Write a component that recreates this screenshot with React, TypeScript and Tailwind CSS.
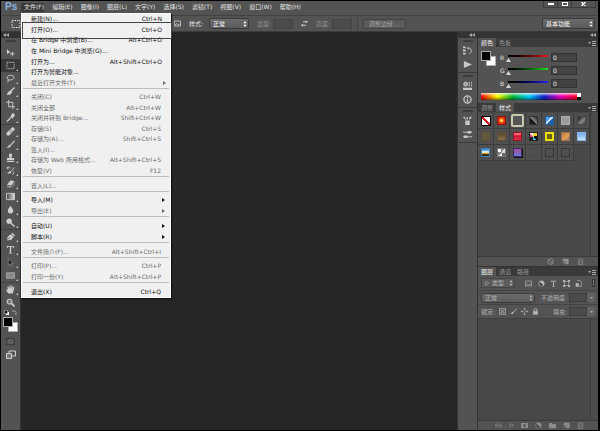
import type { ReactNode } from "react";
import clsx from "clsx";

type MenuEntry = {
  label: string;
  keys?: string;
  sub?: boolean;
  off?: boolean;
};

const fileMenu: { height: string; items: MenuEntry[] }[] = [
  {
    height: "h-[74px]",
    items: [
      { label: "新建(N)...", keys: "Ctrl+N" },
      { label: "打开(O)...", keys: "Ctrl+O" },
      { label: "在 Bridge 中浏览(B)...", keys: "Alt+Ctrl+O" },
      { label: "在 Mini Bridge 中浏览(G)..." },
      { label: "打开为...", keys: "Alt+Shift+Ctrl+O" },
      { label: "打开为智能对象..." },
      { label: "最近打开文件(T)", sub: true, off: true },
    ],
  },
  {
    height: "h-[84px]",
    items: [
      { label: "关闭(C)", keys: "Ctrl+W", off: true },
      { label: "关闭全部", keys: "Alt+Ctrl+W", off: true },
      { label: "关闭并转到 Bridge...", keys: "Shift+Ctrl+W", off: true },
      { label: "存储(S)", keys: "Ctrl+S", off: true },
      { label: "存储为(A)...", keys: "Shift+Ctrl+S", off: true },
      { label: "签入(I)...", off: true },
      { label: "存储为 Web 所用格式...", keys: "Alt+Shift+Ctrl+S", off: true },
      { label: "恢复(V)", keys: "F12", off: true },
    ],
  },
  { height: "h-[11px]", items: [{ label: "置入(L)...", off: true }] },
  {
    height: "h-[21px]",
    items: [
      { label: "导入(M)", sub: true },
      { label: "导出(E)", sub: true, off: true },
    ],
  },
  {
    height: "h-[22px]",
    items: [
      { label: "自动(U)", sub: true },
      { label: "脚本(R)", sub: true },
    ],
  },
  { height: "h-[11px]", items: [{ label: "文件简介(F)...", keys: "Alt+Shift+Ctrl+I", off: true }] },
  {
    height: "h-[21px]",
    items: [
      { label: "打印(P)...", keys: "Ctrl+P", off: true },
      { label: "打印一份(Y)", keys: "Alt+Shift+Ctrl+P", off: true },
    ],
  },
  { height: "h-[11px]", items: [{ label: "退出(X)", keys: "Ctrl+Q" }] },
];

const menus = ["编辑(E)", "图像(I)", "图层(L)", "文字(Y)", "选择(S)", "滤镜(T)", "视图(V)", "窗口(W)", "帮助(H)"];

const icons: Record<string, ReactNode> = {
  move: (
    <>
      <path d="M1 1v6l1.6-1.4L5 5.300z" fill="currentColor" />
      <path d="M7 4v5M4.500 6.500h5" stroke="currentColor" />
    </>
  ),
  marquee: <path d="M1 1.500h8v7H1z" stroke="currentColor" strokeDasharray="1.500 1" />,
  lasso: <path d="M2.500 6C0 4 2 1.500 5 1.500s5 2 3.500 3.500S4 7.500 2.500 6c-1 .5-.5 2 .7 1.500M3 7.500 1.500 9.500" stroke="currentColor" />,
  wand: (
    <>
      <path d="M9.500.5 5 5" stroke="currentColor" strokeWidth="1.500" />
      <path d="M5.500 4 7 5.500 5 8C3.500 9 2 8.500 1 9c.5-1.500.5-3 2-4z" fill="currentColor" />
    </>
  ),
  crop: <path d="M3 0v7.500h7M0 2.500h7.500V10" stroke="currentColor" />,
  dropper: (
    <>
      <path d="M1 9.500 5.500 5" stroke="currentColor" strokeWidth="1.400" />
      <path d="m4.500 3.500 3 3L8 5l1.500-1.700C10.500 1.500 8.500-.5 6.700.7L5.500 3z" fill="currentColor" />
    </>
  ),
  heal: (
    <>
      <path d="M2.500 7.500 7.500 2.500" stroke="currentColor" strokeWidth="4" strokeLinecap="round" />
      <path d="m3.500 4 3 3M5 2.500l3 3" stroke="#535353" strokeWidth=".7" />
    </>
  ),
  brush: (
    <>
      <path d="M9.500 1 5 6" stroke="currentColor" strokeWidth="1.300" />
      <path d="M5.500 6.500C5 8.500 2.500 9 .5 8.500 2.500 8 2.500 5.500 4 5.500z" fill="currentColor" />
    </>
  ),
  stamp: <path d="M5 .5a2 2 0 0 1 1.500 3L6 5.500h3V8H1V5.500h3L3.500 3.500A2 2 0 0 1 5 .5zM1 9h8v1H1z" fill="currentColor" />,
  history: (
    <>
      <path d="M9.500 1.500 5.500 6M1 2h4M1 2l1.500-1.500M1 2l1.500 1.500M8 6c1 1 .5 3-1 3.500" stroke="currentColor" />
      <path d="M6 6.500C5.500 8.500 3 9 1 8.500 3 8 2.500 6 4.500 5.500z" fill="currentColor" />
    </>
  ),
  eraser: (
    <>
      <path d="m5 1.500 4.500 1L6 7.500 1 6.500z" fill="currentColor" />
      <path d="m1 7.500 5 1V10L1 9zM7 8.500l3-4.500v1.500L7 9.500z" fill="currentColor" opacity=".7" />
    </>
  ),
  gradient: (
    <>
      <defs>
        <linearGradient id="tool-gradient">
          <stop stopColor="#444" />
          <stop offset="1" stopColor="#ddd" />
        </linearGradient>
      </defs>
      <path d="M.5 1.500h9v7h-9z" fill="url(#tool-gradient)" stroke="currentColor" />
    </>
  ),
  drop: <path d="M5 .5C6 3 8 4.500 8 6.500a3 3 0 0 1-6 0C2 4.500 4 3 5 .5z" fill="currentColor" />,
  dodge: (
    <>
      <circle cx="3.500" cy="3.500" r="3" fill="currentColor" />
      <path d="m5.500 5.500 4 4" stroke="currentColor" strokeWidth="1.500" />
    </>
  ),
  pen: (
    <>
      <path d="M1 9.500 2 5l3.500-2.500 3 3L6 8.500z" fill="currentColor" />
      <path d="m6.500 1.500 3 3" stroke="currentColor" strokeWidth="1.500" />
      <path d="m1 9.500 3.500-4" stroke="#444" strokeWidth=".7" />
    </>
  ),
  type: <path d="M1 1h8v2.200h-.8L7.800 2H5.700v6.500l1.300.5v.5H3V9l1.300-.5V2H2.200l-.4 1.200H1z" fill="currentColor" />,
  arrow: <path d="M2.500.5v8l2-2 1.300 3L7 9 5.700 6.200h2.500z" fill="#1d1d1d" stroke="#9a9a9a" strokeWidth=".7" />,
  rect: <path d="M.5 2h9v6h-9z" fill="#888" stroke="#aaa" />,
  hand: <path d="M2.500 9.500 0 5.500c.5-1 1.300-.5 2 .5L1.500 2c.8-.8 1.400 0 1.500.5l.6 2L3.700.8c.5-.8 1.200-.4 1.300 0l.3 3.400L6.200.8c.6-.7 1.200-.2 1.200.4L7 4.700l1.300-2.500c.8-.5 1.200.1 1 .8L8 7.500l-.5 2z" fill="currentColor" />,
  zoom: (
    <>
      <circle cx="4" cy="4" r="2.700" fill="#777" stroke="currentColor" strokeWidth="1.200" />
      <path d="m6 6 3.500 3.500" stroke="currentColor" strokeWidth="1.800" />
    </>
  ),
  quickMask: (
    <>
      <path d="M.5 1.500h9v7h-9z" stroke="#383838" />
      <circle cx="5" cy="5" r="2" stroke="#8b8b8b" strokeDasharray="1 .6" />
    </>
  ),
  screens: (
    <>
      <path d="M3 1h6.500v5H3z" stroke="currentColor" />
      <path d="M.5 3.500h5v5h-5z" fill="#777" stroke="currentColor" />
    </>
  ),
  layersHistory: (
    <>
      <path d="M0 .5h3v2H0zM0 4h3v2H0zM0 7.500h3v2H0z" fill="currentColor" />
      <path d="M5 2.500h2.500C10 3.500 9.500 7.500 7 9M5 2.500 6.500 1M5 2.500 6.500 4" stroke="currentColor" />
    </>
  ),
  play: <path d="M1 1v8l9-4z" fill="currentColor" />,
  brushes: (
    <>
      <circle cx="3" cy="3.500" r="2" stroke="currentColor" strokeWidth="1.300" />
      <path d="M1 3.500h4M7 1v5M9.500 1v2M9.500 4v2" stroke="currentColor" />
      <path d="M0 7.500h10V10H0z" fill="currentColor" />
    </>
  ),
  info: (
    <>
      <circle cx="5" cy="5" r="4" stroke="currentColor" strokeWidth="1.500" />
      <path d="M5 2v1.500M5 4.500V8" stroke="currentColor" strokeWidth="1.500" />
    </>
  ),
  presets: <path d="M2.500 5h5v5h-5zM4 1h1.500v3H4zM0 1.500 1.500.5l2 3.500h-1zM7 1.500 9.500.5 9 3 7 4z" fill="currentColor" />,
  sliders: (
    <>
      <path d="M0 2.500h10M0 7.500h10" stroke="currentColor" />
      <path d="M5 1h4v3H5zM1 6h4v3H1z" fill="currentColor" />
    </>
  ),
  search: (
    <>
      <circle cx="6" cy="4" r="3" stroke="currentColor" />
      <path d="M4 6 1.500 9" stroke="currentColor" />
    </>
  ),
  image: <path d="M.5 1.500h9v7h-9zM1 8l3-3 2 2 1.500-1.500L9 7" stroke="currentColor" />,
  adjust: (
    <>
      <circle cx="5" cy="5" r="4.300" fill="currentColor" />
      <path d="M2.500 2.500A3.500 3.500 0 0 0 7.500 7.500z" fill="#484848" />
    </>
  ),
  shape: (
    <>
      <path d="M2 2h6v6H2z" stroke="currentColor" />
      <path d="M0 0h3v3H0zM7 0h3v3H7zM0 7h3v3H0zM7 7h3v3H7z" fill="currentColor" />
    </>
  ),
  smart: (
    <>
      <path d="M3 .5h4L9.500 3v6H5" stroke="currentColor" />
      <path d="M1 4.500h4.500V9.500H1z" fill="currentColor" />
    </>
  ),
  checker: (
    <>
      <path d="M.5.500h9v9h-9z" stroke="currentColor" />
      <path d="M2 2h2v2H2zM6 2h2v2H6zM4 4h2v2H4zM2 6h2v2H2zM6 6h2v2H6z" fill="currentColor" />
    </>
  ),
  cross: <path d="M5 0v3.500M5 6.500V10M0 5h3.500M6.500 5H10M3.500 1.500h3M3.500 8.500h3M1.500 3.500v3M8.500 3.500v3" stroke="currentColor" />,
  lock: (
    <>
      <path d="M3 5V2.500C3 .3 7 .3 7 2.500V5" stroke="currentColor" strokeWidth="1.400" />
      <path d="M1.500 4.500h7v5h-7z" fill="currentColor" />
    </>
  ),
  none: (
    <>
      <circle cx="5" cy="5" r="4" stroke="currentColor" strokeWidth="1.400" />
      <path d="m2 2 6 6" stroke="currentColor" strokeWidth="1.400" />
    </>
  ),
  page: (
    <>
      <path d="M1 1h8.500v8H5V5H1z" fill="currentColor" />
      <path d="M1 6h3v3z" fill="currentColor" />
    </>
  ),
  trash: <path d="M1 2.500h8M4 1h2M2 3v6.500h6V3M4 4.500V8M6 4.500V8" stroke="currentColor" />,
  link: <path d="M4 3H2.500a2 2 0 0 0 0 4H4M6 3h1.500a2 2 0 0 1 0 4H6M3 5h4" stroke="currentColor" strokeWidth="1.200" />,
  mask: <path d="M0 1.500h10v7H0zM5 3a2 2 0 1 0 .01 0z" fill="currentColor" fillRule="evenodd" />,
  folder: <path d="M0 1.500h4l1 1.500h5v6H0z" fill="currentColor" />,
  exchange: <path d="M3 2.500h6M7.500 1 9 2.500 7.500 4M7 7.500H1M2.500 6 1 7.500 2.500 9" stroke="currentColor" strokeWidth="1.200" />,
  swap: <path d="M1 2h3.500C6.500 2 8 3.500 8 5.500V9M2.500.5 1 2l1.500 1.500M6.500 7.500 8 9l1.500-1.500" stroke="currentColor" strokeWidth="1.200" />,
};

const Icon = ({ name, className = "size-2.5" }: { name: string; className?: string }) => (
  <svg viewBox="0 0 10 10" fill="none" className={clsx("shrink-0", className)} aria-hidden="true">
    {icons[name]}
  </svg>
);

const toolGroups = [
  ["move", "marquee", "lasso", "wand", "crop", "dropper"],
  ["heal", "brush", "stamp", "history", "eraser", "gradient", "drop", "dodge"],
  ["pen", "type", "arrow", "rect"],
  ["hand", "zoom"],
];

const styleSwatches = [
  "size-[10px] bg-[linear-gradient(45deg,#fff_42%,#d71920_42%,#d71920_58%,#fff_58%)] border-black",
  "size-[9px] bg-[radial-gradient(#ffe95c_15%,#f04a12_45%,#c3120c)] border-[#8e130d]",
  "size-[13px] rounded-xs bg-[#555] border-2 border-[#c9c8ae]",
  "size-[9px] bg-[linear-gradient(45deg,#1c1c1c_45%,#888_50%,#222)] border-[#333]",
  "size-[9px] bg-[linear-gradient(135deg,#4aa0ea_30%,#eef8ff_50%,#1665b4_60%)] border-[#235a94]",
  "size-[9px] bg-[#9d9d9d] border-[#adadad]",
  "size-[9px] bg-[linear-gradient(135deg,#333_20%,#888_60%,#444)] border-[#444]",
  "size-[9px] bg-[#64583c] border-[#5a523e]",
  "size-[9px] bg-[linear-gradient(#574a32,#85704a)] border-[#5d5138]",
  "size-[9px] bg-[linear-gradient(#ff6277_20%,#c9152f_40%,#d9334d)] border-[#8e1427]",
  "size-[9px] bg-[conic-gradient(#e8d62c_20%,#111_20%_40%,#3db5e8_40%_55%,#222_55%_75%,#e94b91_75%_85%,#eee_85%)] border-[#222]",
  "size-[9px] bg-[#6c6210] border-2 border-[#ece002]",
  "size-[9px] bg-[linear-gradient(135deg,#b4764f,#e7a14d_60%,#936a87)] border-[#a4744e]",
  "size-[9px] bg-[linear-gradient(#74a9ec,#c6e4ff)] border-[#86b5ec]",
  "size-[9px] bg-[linear-gradient(#3c91dd_15%,#fff_40%,#e9bb52_60%,#3a2b10_80%)] border-[#3982b4]",
  "size-[9px] bg-[conic-gradient(#888_12%,#ddd_12%_30%,#666_30%_45%,#eee_45%_60%,#888_60%_80%,#fff_80%)] border-[#777]",
  "size-[9px] bg-[linear-gradient(#a24f9c,#6676d4)] border-[#3a2a64] shadow-[1px_1px_0_#111]",
  "size-[9px] border-[#474747]",
  "size-[9px] border-[#363636]",
  "size-[9px] border-[#363636]",
];

const channels = [
  { name: "R", track: "from-black to-[#f01616]" },
  { name: "G", track: "from-black to-[#22e022]" },
  { name: "B", track: "from-black to-[#2222f4]" },
];

const Grip = () => <div className="mx-auto h-0.5 w-2.5 border-y border-[#3d3d3d]" />;

const Arrows = () => (
  <svg viewBox="0 0 6 4" className="h-1 w-1.5" fill="#a4a4a4" aria-hidden="true">
    <path d="M3 0v4L0 2zM6 0v4L3 2z" />
  </svg>
);

const Dropdown = ({ label, value, className }: { label: string; value: string; className: string }) => (
  <div
    className={clsx(
      "relative flex items-center rounded-xs border border-[#3a3a3a] bg-linear-to-b from-[#6b6b6b] to-[#5c5c5c]",
      className,
    )}
  >
    <select aria-label={label} className="h-full w-full appearance-none pl-[3px] outline-none">
      <option>{value}</option>
    </select>
    <svg viewBox="0 0 4 6" className="pointer-events-none absolute right-px h-1.5 w-1" fill="currentColor" aria-hidden="true">
      <path d="M2 0l1.500 2.300H.5zM2 6 .5 3.700h3z" />
    </svg>
  </div>
);

const Tabs = ({ names, active }: { names: string[]; active: number }) => (
  <div className="flex h-[9px] items-stretch bg-[#3a3a3a]" role="tablist">
    {names.map((name, index) => (
      <button
        key={name}
        role="tab"
        aria-selected={index === active}
        className={clsx("px-[3px] leading-[9px]", index === active ? "bg-[#535353] text-[#f0f0f0]" : "text-[#969696]")}
      >
        {name}
      </button>
    ))}
    <button aria-label="面板菜单" className="mr-0.5 ml-auto flex items-center text-[#aaa]">
      <svg viewBox="0 0 8 6" className="h-1.5 w-2" aria-hidden="true">
        <path d="M0 2h3L1.500 4zM4 1h4v1H4zM4 3h4v1H4zM4 5h4v1H4z" fill="currentColor" />
      </svg>
    </button>
  </div>
);

const Swatches = () => (
  <div className="relative size-[15px]">
    <div className="absolute right-0 bottom-0 size-[10px] border border-[#aaa] bg-white" />
    <div className="absolute top-0 left-0 size-[10px] border border-[#aaa] bg-black" />
  </div>
);

const FileMenu = () => (
  <div role="menu" className="absolute top-full left-0 z-10 w-[150px] border border-[#fafafa] bg-[#f0f0f0] text-[#111] shadow-[1px_1px_1px_#111]">
    {fileMenu.map((group, index) => (
      <div key={`group_${index}`} className={clsx(index > 0 && "mx-px border-t border-[#bdbdbd] pt-[3px]")}>
        <div className={clsx("grid auto-rows-fr", group.height)}>
          {group.items.map(({ label, keys, sub, off }) => (
            <button
              key={label}
              role="menuitem"
              aria-disabled={off}
              className={clsx(
                "flex items-center justify-between pr-2 leading-none whitespace-nowrap",
                index > 0 ? "pl-2" : "pl-[9px]",
                off && "text-[#6c6c6c]",
              )}
            >
              <span>{label}</span>
              {keys && <span>{keys}</span>}
              {sub && (
                <svg viewBox="0 0 3 4" className="-mr-1 h-1 w-[3px]" fill="currentColor" aria-hidden="true">
                  <path d="M0 0v4l3-2z" />
                </svg>
              )}
            </button>
          ))}
        </div>
      </div>
    ))}
    <div className="pointer-events-none absolute top-2 -right-0.5 left-0 h-[17px] border border-[#444]" />
  </div>
);

const Toolbar = () => (
  <aside className="flex w-5 flex-col border-r border-[#333] bg-[#535353] text-[#cfcfcf]">
    <div className="flex h-1.5 items-center bg-[#333] pl-0.5">
      <Arrows />
    </div>
    <div className="pt-0.5 pb-1">
      <Grip />
    </div>
    {toolGroups.map((group, index) => (
      <div key={`tools_${index}`} className={clsx(index > 0 && "border-t border-[#424242]")}>
        {group.map((name) => (
          <button
            key={name}
            aria-label={name}
            className={clsx("relative flex h-[13px] w-full items-center justify-center", name === "marquee" && "bg-[#393939]")}
          >
            <Icon name={name} className="size-[9px]" />
            {name !== "move" && name !== "zoom" && (
              <svg viewBox="0 0 2 2" className="absolute right-0.5 bottom-px size-0.5" fill="currentColor" aria-hidden="true">
                <path d="M2 0v2H0z" />
              </svg>
            )}
          </button>
        ))}
      </div>
    ))}
    <div className="flex items-center justify-between px-[3px] py-px">
      <svg viewBox="0 0 5 5" className="size-[5px]" aria-hidden="true">
        <path d="M2 2h3v3H2z" fill="#fff" />
        <path d="M.5.500h3v3h-3z" fill="#111" stroke="#bbb" strokeWidth=".6" />
      </svg>
      <Icon name="swap" className="size-[5px]" />
    </div>
    <div className="flex justify-center pt-px">
      <Swatches />
    </div>
    <button aria-label="快速蒙版" className="mt-[3px] flex h-[13px] items-center justify-center">
      <Icon name="quickMask" className="size-[9px]" />
    </button>
    <button aria-label="屏幕模式" className="flex h-[13px] items-center justify-center">
      <Icon name="screens" />
    </button>
  </aside>
);

const IconDock = () => (
  <aside className="w-5 border-l border-[#333] bg-[#535353] text-[#c8c8c8]">
    <div className="flex h-1.5 items-center justify-end bg-[#333] pr-0.5">
      <Arrows />
    </div>
    {[
      ["layersHistory", "play"],
      ["brushes", "info"],
      ["presets", "sliders"],
    ].map((group) => (
      <div key={group[0]} className="border-b border-[#3a3a3a] pt-0.5 pb-px">
        <Grip />
        <div className="flex flex-col pt-px">
          {group.map((name) => (
            <button key={name} aria-label={name} className="flex h-3.5 items-center justify-center">
              <Icon name={name} className="size-[9px]" />
            </button>
          ))}
        </div>
      </div>
    ))}
  </aside>
);

const ColorPanel = () => (
  <section className="pb-[3px]">
    <Tabs names={["颜色", "色板"]} active={0} />
    <div className="flex gap-1 px-[3px] pt-1">
      <Swatches />
      <div className="flex flex-1 flex-col">
        {channels.map(({ name, track }) => (
          <div key={name} className="flex h-[13px] items-center gap-[3px]">
            <label htmlFor={`channel-${name}`} className="w-[5px]">
              {name}
            </label>
            <div className="relative h-2 w-10">
              <div className={clsx("mt-px h-0.5 bg-linear-to-r", track)} />
              <svg viewBox="0 0 5 4" className="absolute -left-0.5 top-1 h-1 w-[5px]" fill="#d6d6d6" aria-hidden="true">
                <path d="M2.500 0 5 4H0z" />
              </svg>
              <input type="range" min="0" max="255" defaultValue="0" aria-label={`${name} 滑块`} className="absolute inset-0 w-full opacity-0" />
            </div>
            <input
              id={`channel-${name}`}
              defaultValue="0"
              className="h-[9px] w-[26px] border border-[#333] bg-[#434343] pl-px leading-none text-[#f0f0f0]"
            />
          </div>
        ))}
      </div>
    </div>
    <div className="mx-[3px] mt-[3px] flex w-[100px]">
      <div className="h-[7px] flex-1 bg-[linear-gradient(#fffc,#fff0_45%,#0000_55%,#0008),linear-gradient(90deg,#f00,#ff0_17%,#0b3_33%,#0cf_50%,#12c_66%,#e0b_83%,#f02)]" />
      <div className="w-1 bg-linear-to-b from-white from-50% to-black to-50%" />
    </div>
  </section>
);

const StylesPanel = () => (
  <section className="flex h-[163px] flex-col">
    <Tabs names={["调整", "样式"]} active={1} />
    <div className="flex flex-1 bg-[#484848]">
      <div className="grid flex-1 auto-rows-[16px] grid-cols-7 content-start pt-px">
        {styleSwatches.map((style, index) => (
          <button
            key={`style_${index}`}
            aria-label={`样式 ${index + 1}`}
            className="flex items-center justify-center border-r border-b border-[#3c3c3c] bg-[#4f4f4f]"
          >
            <span className={clsx("border", style)} />
          </button>
        ))}
      </div>
      <div className="w-2 border-l border-[#3c3c3c] bg-[#4c4c4c]" />
    </div>
    <div className="flex h-[10px] items-center justify-end gap-2 border-t border-[#3a3a3a] pr-3.5 text-[#909090]">
      <Icon name="none" className="size-[7px]" />
      <Icon name="page" className="size-[7px]" />
      <Icon name="trash" className="size-[7px]" />
    </div>
  </section>
);

const PercentField = ({ label }: { label: string }) => (
  <label className="ml-auto flex items-center gap-0.5 whitespace-nowrap">
    {label}
    <span className="flex h-[9px]">
      <input className="w-[18px] border border-[#3d3d3d] bg-[#4b4b4b]" />
      <span className="flex w-2 items-center justify-center bg-[#626262]">
        <svg viewBox="0 0 3 2" className="h-0.5 w-[3px]" fill="#aaa" aria-hidden="true">
          <path d="M0 0h3L1.500 2z" />
        </svg>
      </span>
    </span>
  </label>
);

const LayersPanel = () => (
  <section className="flex flex-1 flex-col border-t border-[#333] text-[#b4b4b4]">
    <Tabs names={["图层", "通道", "路径"]} active={0} />
    <div className="flex h-[15px] items-center border-b border-[#444] px-[3px]">
      <div className="flex h-[10px] w-[34px] items-center border border-[#464646] bg-[#5b5b5b] pl-0.5">
        <Icon name="search" className="size-[5px]" />
        <Dropdown label="图层过滤" value="类型" className="h-2 flex-1 border-0 bg-none" />
      </div>
      <div className="flex flex-1 items-center justify-between px-2.5">
        {["image", "adjust", "type", "shape", "smart"].map((name) => (
          <Icon key={name} name={name} className="size-[7px]" />
        ))}
      </div>
      <div className="h-2 w-[3px] border border-[#333] bg-[#777]" />
    </div>
    <div className="flex h-[14px] items-center border-b border-[#444] px-[3px]">
      <Dropdown label="混合模式" value="正常" className="h-[10px] w-[54px]" />
      <PercentField label="不透明度:" />
    </div>
    <div className="flex h-[14px] items-center gap-1 border-b border-[#3f3f3f] px-[3px]">
      锁定:
      <div className="flex items-center gap-1">
        {["checker", "brush", "cross", "lock"].map((name) => (
          <button key={name} aria-label={name}>
            <Icon name={name} className="size-[7px]" />
          </button>
        ))}
      </div>
      <PercentField label="填充:" />
    </div>
    <div className="flex flex-1 justify-end bg-[#484848]">
      <div className="w-2 border-l border-[#3c3c3c] bg-[#4c4c4c]" />
    </div>
    <div className="flex h-[10px] items-center justify-end gap-[7px] border-t border-[#3a3a3a] pr-3.5 text-[#8c8c8c]">
      <Icon name="link" className="size-[7px]" />
      <span className="font-['Liberation_Serif',serif] text-[7px] leading-none italic">fx</span>
      {["mask", "adjust", "folder", "page", "trash"].map((name) => (
        <Icon key={name} name={name} className="size-[7px]" />
      ))}
    </div>
  </section>
);

const OptionsBar = () => (
  <div className="flex h-[17px] items-center border-y border-t-[#424242] border-b-[#3a3a3a] pr-[3px] pl-2.5">
    <Icon name="marquee" />
    <div className="ml-[153px] flex items-center gap-2">
      <Icon name="image" className="size-[7px]" />
      <div className="flex items-center gap-1.5">
        样式:
        <Dropdown label="样式" value="正常" className="h-[11px] w-10 text-white" />
      </div>
      <label className="flex items-center gap-0.5 text-[#949494]">
        宽度:
        <input className="h-[10px] w-5 border border-[#444] bg-[#4b4b4b]" />
      </label>
      <Icon name="exchange" className="size-[7px]" />
      <label className="flex items-center gap-0.5 text-[#949494]">
        高度:
        <input className="h-[10px] w-5 border border-[#444] bg-[#4b4b4b]" />
      </label>
    </div>
    <div className="mx-[5px] h-3 border-l border-[#424242]" />
    <button className="h-[10px] w-[43px] rounded-xs border border-[#444] bg-[#5b5b5b] leading-none text-[#a4a4a4]">调整边缘 ...</button>
    <Dropdown label="工作区" value="基本功能" className="ml-auto h-[11px] w-[53px] text-white" />
  </div>
);

export default function App() {
  return (
    <div className="flex h-screen flex-col border border-r-2 border-black bg-[#535353] font-['DejaVu_Sans','Noto_Sans_CJK_SC',sans-serif] text-[6px] leading-none text-[#e4e4e4]">
      <header className="flex h-[14px] items-start">
        <div className="w-5 pt-px pl-1 font-['Liberation_Sans',sans-serif] text-[10px] leading-none font-bold text-[#8bb5e2]">Ps</div>
        <nav className="flex h-3 items-center gap-2">
          <div className="relative flex h-full items-center">
            <button className="h-[9px] bg-[#3a3a3a] pl-[3px]">文件(F)</button>
            <FileMenu />
          </div>
          {menus.map((menu) => (
            <button key={menu}>{menu}</button>
          ))}
        </nav>
        <div className="mr-0.5 ml-auto flex h-[7px] border border-t-0 border-[#3b3b3b] text-white">
          <button aria-label="最小化" className="flex w-[14px] items-center justify-center border-r border-[#3b3b3b]">
            <span className="h-0.5 w-1.5 bg-white" />
          </button>
          <button aria-label="最大化" className="flex w-[14px] items-center justify-center border-r border-[#3b3b3b]">
            <span className="h-1 w-1.5 border border-white" />
          </button>
          <button aria-label="关闭" className="flex w-[23px] items-center justify-center">
            <svg viewBox="0 0 5 4" className="h-1 w-[5px]" stroke="currentColor" strokeWidth="1.300" aria-hidden="true">
              <path d="m.5 0 4 4M4.500 0l-4 4" />
            </svg>
          </button>
        </div>
      </header>
      <OptionsBar />
      <main className="flex min-h-0 flex-1">
        <Toolbar />
        <div className="flex-1 bg-[#262626]" />
        <IconDock />
        <div className="flex w-[121px] flex-col border-l border-[#333]">
          <div className="flex h-1.5 items-center justify-end bg-[#333] pr-0.5">
            <Arrows />
          </div>
          <ColorPanel />
          <StylesPanel />
          <LayersPanel />
        </div>
      </main>
    </div>
  );
}
